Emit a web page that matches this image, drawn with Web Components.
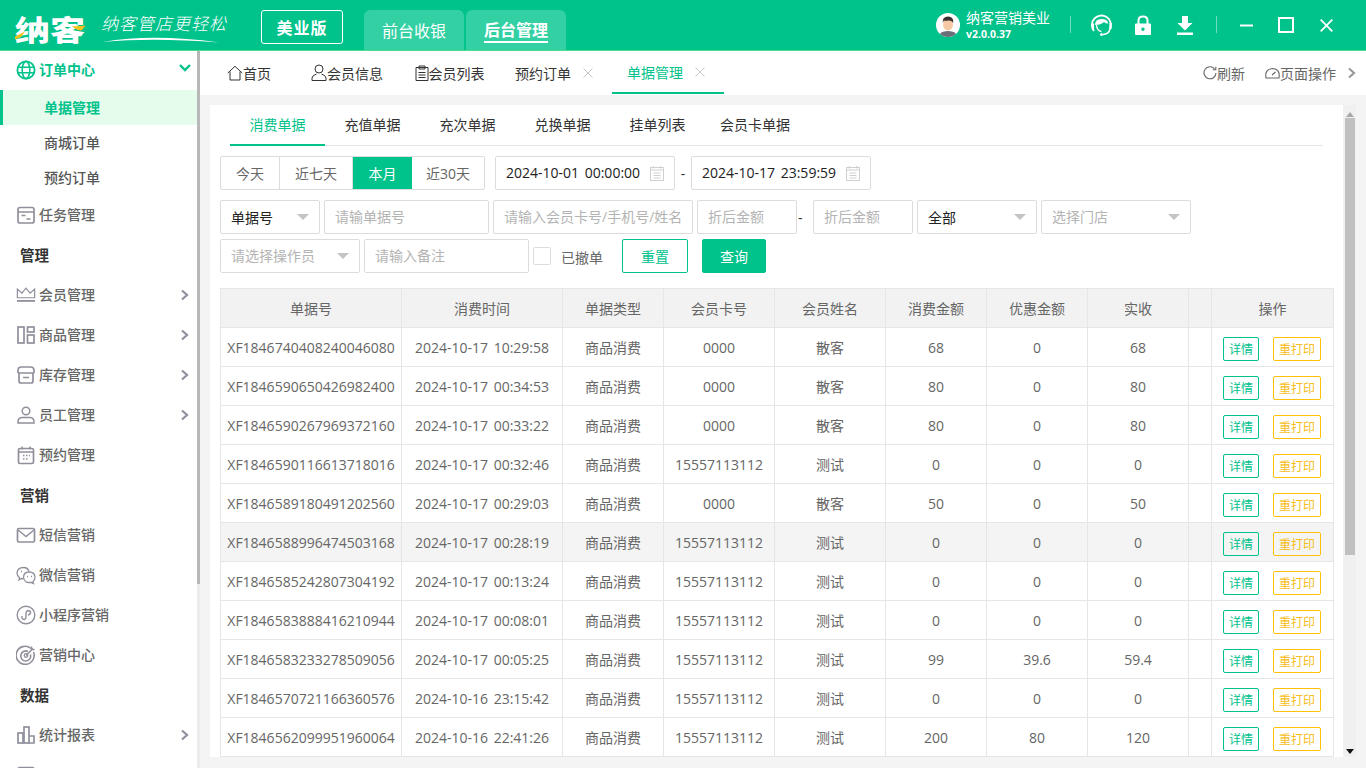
<!DOCTYPE html>
<html lang="zh-CN"><head><meta charset="utf-8"><title>纳客</title>
<style>
html,body{margin:0;height:768px;overflow:hidden;background:#f4f4f4}
body{font:14px "Open Sans","Noto Sans CJK SC",sans-serif;color:#666;display:grid;grid-template-columns:200px 1fr;grid-template-rows:51px 717px}
nk-header{grid-column:1/3}
</style></head><body>
<nk-header></nk-header>
<nk-sidebar></nk-sidebar>
<nk-main></nk-main>
<script>
const FONT='"Open Sans","Noto Sans CJK SC",sans-serif';
const svg=(w,h,vb,body,extra='')=>`<svg width="${w}" height="${h}" viewBox="${vb}" fill="none" ${extra}>${body}</svg>`;
const S='stroke="currentColor"';
const ICONS={
 globe:svg(20,20,'0 0 20 20',`<circle cx="10" cy="10" r="8.600" ${S} stroke-width="1.800"/><ellipse cx="10" cy="10" rx="3.800" ry="8.600" ${S} stroke-width="1.600"/><path d="M2 7.200h16M2 12.800h16" ${S} stroke-width="1.600"/>`),
 task:svg(20,20,'0 0 20 20',`<rect x="2" y="2.500" width="16" height="15.500" rx="2" ${S} stroke-width="1.700"/><path d="M2 7h16M5.500 10.500h4M10.500 14h4" ${S} stroke-width="1.500"/>`),
 crown:svg(22,20,'0 0 22 20',`<path d="M1.500 13V3.500l5 4.500L11 2.500 15.500 8l5-4.500V13z" ${S} stroke-width="1.300"/><path d="M1 16.500h20" ${S} stroke-width="2"/>`),
 goods:svg(20,20,'0 0 20 20',`<rect x="2" y="2" width="6" height="16" ${S} stroke-width="1.700"/><rect x="11.500" y="2" width="6.500" height="5" ${S} stroke-width="1.700"/><rect x="11.500" y="10" width="6.500" height="8" ${S} stroke-width="1.700"/>`),
 stock:svg(20,20,'0 0 20 20',`<path d="M2 8V5.500Q2 2 5.500 2h9Q18 2 18 5.500V8M2 8h16M3 8v8q0 2 2 2h10q2 0 2-2V8M7 12.500h6" ${S} stroke-width="1.700"/>`),
 staff:svg(20,20,'0 0 20 20',`<circle cx="10" cy="6" r="3.800" ${S} stroke-width="1.500"/><path d="M2 18v-1.500Q2 13 6 12.500h8q4 .5 4 4V18z" ${S} stroke-width="1.500"/>`),
 cal:svg(20,20,'0 0 20 20',`<rect x="2.500" y="3.500" width="15" height="15" rx="1.500" ${S} stroke-width="1.700"/><path d="M2.500 7h15M6 1.500v3M14 1.500v3" ${S} stroke-width="1.500"/><path d="M7 10.500h1.500M10 10.500h1.500M13 10.500h1M7 14h1.500M10 14h1.500" ${S} stroke-width="1.300"/>`),
 mail:svg(20,20,'0 0 20 20',`<rect x="1.500" y="3.500" width="17" height="13.500" rx="1.500" ${S} stroke-width="1.700"/><path d="M2 5l8 6.500L18 5" ${S} stroke-width="1.500"/>`),
 wechat:svg(20,20,'0 0 20 20',`<path d="M13 6.500Q12 2.500 7.500 2.500 1.500 2.500 1 8q0 3 2.500 4.500L3 15l2.500-1.500 2 .3" ${S} stroke-width="1.300"/><path d="M13 7q6 0 6 5.500 0 2.500-2 4l.5 2-2.500-1.200q-6.500 1.200-7.500-4.800Q7.500 7 13 7z" ${S} stroke-width="1.300"/><path d="M11 11.500h1M15 11.500h1M5 6.500h1" ${S} stroke-width="1.300"/>`),
 mini:svg(20,20,'0 0 20 20',`<circle cx="10" cy="10" r="8.800" ${S} stroke-width="1.400"/><path d="M6 11q-.5 3.500 2.500 3.500Q10 14 10 12V8.500Q10 6 12 5.500q2.500 0 2.500 2 0 2-2.500 2.500" ${S} stroke-width="1.400"/>`),
 target:svg(20,20,'0 0 20 20',`<path d="M15 3.500A9 9 0 1 0 17.500 7" ${S} stroke-width="1.600"/><path d="M12 6.500A5 5 0 1 0 14.500 9.500" ${S} stroke-width="1.600"/><circle cx="10" cy="10.500" r="1.800" ${S} stroke-width="1.300"/><path d="M10 10.500L17 3.500M15.500 1.500v3h3" ${S} stroke-width="1.500"/>`),
 chart:svg(20,20,'0 0 20 20',`<rect x="2" y="8" width="5" height="10" ${S} stroke-width="1.700"/><rect x="8" y="2" width="5" height="16" ${S} stroke-width="1.700"/><path d="M13 11h5v7h-5" ${S} stroke-width="1.700"/>`),
 right:svg(10,12,'0 0 10 12',`<path d="M2 1.500L7 6l-5 4.500" ${S} stroke-width="2.200"/>`),
 down:svg(12,10,'0 0 12 10',`<path d="M1 2l5 5 5-5" ${S} stroke-width="2.400"/>`),
 home:svg(16,16,'0 0 16 16',`<path d="M.8 8L8 1.300 15.200 8M3 6.500V15h10V6.500" ${S} stroke-width="1"/>`),
 user:svg(16,17,'0 0 16 17',`<circle cx="8" cy="5" r="4" ${S}/><path d="M1 16.500v-2.500Q1 11.500 5.500 10M15 16.500v-2.500q0-2.500-4.500-4M1 16.500h14" ${S}/>`),
 list:svg(14,16,'0 0 14 16',`<path d="M1 2.500h12V15.500H1zM4 1v3h6V1zM3.500 7.500h7M3.500 10h7M3.500 12.500h7" ${S}/>`),
 refresh:svg(14,14,'0 0 14 14',`<path d="M11.500 2.800A6 6 0 1 0 13 7" ${S} stroke-width="1.100"/><path d="M12.800 .8v3h-3" ${S} stroke-width="1.100"/>`),
 gauge:svg(15,14,'0 0 15 14',`<path d="M1 12Q-.5 3 7.500 2.500 15.500 3 14 12zM7 9l3.500-3" ${S} stroke-width="1.100"/>`),
 date:svg(16,17,'0 0 16 17',`<rect x="1.500" y="2.500" width="13" height="13" ${S}/><path d="M1.500 5h13M4.500 1v2.500M11.500 1v2.500M4.500 8h7M4.500 10.500h7M4.500 13h7" ${S}/>`)
};
class Base extends HTMLElement{
 constructor(){super();this.attachShadow({mode:'open'});}
 set(html){this.shadowRoot.innerHTML=html;}
}
class NkHeader extends Base{connectedCallback(){this.set(`<style>
:host{display:flex;align-items:stretch;height:51px;box-sizing:border-box;background:#00c28b;border-bottom:1px solid #4bdc8e;color:#fff;font-family:${FONT}}
.logo{width:71px;margin-left:15px;display:flex;align-items:center;font:900 35px/1 "Noto Sans CJK SC",sans-serif;white-space:nowrap;position:relative;box-sizing:border-box}
.logo span{display:block;transform:scaleY(.8);transform-origin:50% 50%;margin-top:6px}
.logo svg{position:absolute;left:0;top:0}
.slogan{margin-left:15px;width:125px;display:flex;flex-direction:column;padding-top:12px;font:italic 300 17px/21px "Noto Sans CJK SC",sans-serif;letter-spacing:1px;white-space:nowrap}
.slogan svg{margin-top:2px;margin-left:2px}
.ed{margin:10px 0 6px 35px;width:82px;box-sizing:border-box;border:1px solid #fff;border-radius:3px;display:flex;align-items:center;justify-content:center;font-weight:700;font-size:16px;letter-spacing:1px}
.tab{margin-top:10px;width:100px;background:#33d0a3;border-radius:6px 6px 0 0;display:flex;align-items:center;justify-content:center;font-size:16px;padding-bottom:1px;box-sizing:border-box}
.t1{margin-left:21px}.t2{margin-left:2px;font-weight:700}
.t2 span{border-bottom:2px solid #fff;line-height:20px;padding-bottom:1px;margin-top:3px}
.sp{flex:1}
.av{margin-top:13px;width:24px;height:24px;margin-right:6px}
.who{width:104px;padding-top:8px;font-size:14px;line-height:19px}
.who small{display:block;font-size:10.500px;font-weight:700;line-height:15px}
.sep{width:1px;height:17px;background:#6fdcbc;margin-top:16px}
.ic{display:flex;align-items:center;justify-content:center;height:50px}
</style>
<div class="logo"><span>纳客</span>${svg(71,50,'0 0 71 50','<path d="M0 36.500L10 31.500l-4 5.500-6 2.500z" fill="#f6c21c"/><path d="M57 26q6 .5 13.500-.5l-4 5q-5 0-9.500-4.500z" fill="#f6c21c"/>')}</div>
<div class="slogan"><span>纳客管店更轻松</span>${svg(116,8,'0 0 116 8','<path d="M0 7Q50 -1.500 116 7.500Q50 2.500 0 7z" fill="#fff"/>')}</div>
<div class="ed">美业版</div>
<div class="tab t1">前台收银</div><div class="tab t2"><span>后台管理</span></div>
<div class="sp"></div>
<div class="av">${svg(24,24,'0 0 24 24','<defs><clipPath id="c"><circle cx="12" cy="12" r="12"/></clipPath></defs><circle cx="12" cy="12" r="12" fill="#fff"/><g clip-path="url(#c)"><path d="M3 24q0-6 9-6t9 6z" fill="#6b6f78"/><ellipse cx="12" cy="11.500" rx="5" ry="6" fill="#f6c9a4"/><path d="M6.800 10Q6 3.500 12 3.500T17.200 10Q16 7 12.500 7.500 9 8 7.800 7.500z" fill="#3a3230"/></g>')}</div>
<div class="who">纳客营销美业<small>v2.0.0.37</small></div>
<div class="sep"></div>
<div class="ic" style="margin-left:20px;width:21px">${svg(21,23,'0 0 21 23','<path d="M3 17A9.500 9.500 0 1 1 19 15" stroke="#fff" stroke-width="1.800"/><path d="M4 11Q4 5 10.500 5T17 9.500q-2 .5-4-1.500-3 3-9 3z" fill="#fff"/><path d="M2 9.500v6M19.500 9v6" stroke="#fff" stroke-width="2.200"/><path d="M5.500 11q.5 6 5 6.500M19 15q-1 5-7 5.500" stroke="#fff" stroke-width="1.400"/><circle cx="10.500" cy="20.500" r="1.500" fill="#fff"/>')}</div>
<div class="ic" style="margin-left:23px;width:16px">${svg(16,21,'0 0 16 21','<path d="M3.500 9V5.500Q3.500 1.500 8 1.500T12.500 5.500V9" stroke="#fff" stroke-width="2"/><path fill-rule="evenodd" d="M1 8.500h14q1 0 1 1V19q0 1-1 1H1q-1 0-1-1V9.500q0-1 1-1zM8 12.500a1.700 1.700 0 1 0 .01 0z" fill="#fff"/>')}</div>
<div class="ic" style="margin-left:26px;width:16px">${svg(16,19,'0 0 16 19','<path d="M5 0h6v7h4.500L8 14.500.5 7H5zM0 16.500h16V19H0z" fill="#fff"/>')}</div>
<div class="sep" style="margin-left:23px"></div>
<div class="ic" style="margin-left:23px;width:13px">${svg(13,3,'0 0 13 3','<path d="M0 1.500h13" stroke="#fff" stroke-width="2"/>')}</div>
<div class="ic" style="margin-left:25px;width:16px">${svg(16,16,'0 0 16 16','<rect x="1" y="1" width="14" height="14" stroke="#fff" stroke-width="2"/>')}</div>
<div class="ic" style="margin:0 33px 0 26px;width:13px">${svg(13,13,'0 0 13 13','<path d="M.7.700l11.600 11.600M12.300.700L.7 12.300" stroke="#fff" stroke-width="1.800"/>')}</div>`);}}
class NkNavItem extends Base{connectedCallback(){
 const icon=this.getAttribute('icon'),arrow=this.hasAttribute('arrow');
 this.set(`<style>
:host{display:flex;align-items:center;height:40px;flex:none;color:#666;font-weight:500;font-size:14px}
:host([open]){color:#00c28b;font-weight:700}
.i{width:20px;height:20px;margin-left:16px;margin-right:3px;display:flex;color:#90909c}
:host([open]) .i{color:#00c28b}
.t{margin-top:-2px}
.a{margin-left:auto;margin-right:7px;display:flex;color:#90909c}
:host([open]) .a{color:#00c28b;margin-top:-4px;margin-right:6px}
</style><span class="i">${ICONS[icon]}</span><span class="t"><slot></slot></span>${arrow?`<span class="a">${this.hasAttribute('open')?ICONS.down:ICONS.right}</span>`:''}`);}}
class NkSubItem extends Base{connectedCallback(){this.set(`<style>
:host{display:flex;align-items:center;height:35px;flex:none;padding:0 0 2px 44px;color:#555;font-weight:500;font-size:14px;box-sizing:border-box}
:host([active]){background:#e5fced;color:#00c28b;font-weight:700;border-left:3px solid #00c28b;padding-left:41px}
</style><slot></slot>`);}}
class NkSection extends Base{connectedCallback(){this.set(`<style>
:host{display:flex;align-items:center;height:40px;flex:none;padding:0 0 2px 20px;color:#333;font-weight:700;font-size:14.500px;box-sizing:border-box}
</style><slot></slot>`);}}
class NkSidebar extends Base{connectedCallback(){
 const n=(i,t,a)=>`<nk-nav-item icon="${i}" ${a?'arrow':''}>${t}</nk-nav-item>`;
 this.set(`<style>
:host{display:flex;height:717px;overflow:hidden;background:#fff;font-family:${FONT}}
.col{width:197px;flex:none;display:flex;flex-direction:column;overflow:hidden}
.bar{width:3px;background:#ececec;flex:none}
.thumb{height:533px;background:#b8b8b8}
.first{margin-top:-1px}
</style><div class="col">
<nk-nav-item class="first" icon="globe" arrow open>订单中心</nk-nav-item>
<nk-sub-item active>单据管理</nk-sub-item><nk-sub-item>商城订单</nk-sub-item><nk-sub-item>预约订单</nk-sub-item>
${n('task','任务管理')}<nk-section>管理</nk-section>
${n('crown','会员管理',1)}${n('goods','商品管理',1)}${n('stock','库存管理',1)}${n('staff','员工管理',1)}${n('cal','预约管理')}
<nk-section>营销</nk-section>
${n('mail','短信营销')}${n('wechat','微信营销')}${n('mini','小程序营销')}${n('target','营销中心')}
<nk-section>数据</nk-section>${n('chart','统计报表',1)}${n('task','')}
</div><div class="bar"><div class="thumb"></div></div>`);}}
class NkBtn extends Base{connectedCallback(){this.set(`<style>
:host{display:flex;align-items:center;justify-content:center;box-sizing:border-box;height:34px;border-radius:2px;font-size:14px;border:1px solid #00c28b;color:#00c28b;background:#fff}
:host([primary]){background:#00c28b;color:#fff}
</style><slot></slot>`);}}
class NkField extends Base{connectedCallback(){
 const ph=this.hasAttribute('ph'),kind=this.getAttribute('kind')||'';
 const tail=kind==='select'?`<svg width="12" height="6" viewBox="0 0 12 6"><path d="M0 0h12L6 6z" fill="#c4c4c4"/></svg>`:kind==='date'?`<span class="d">${ICONS.date}</span>`:'';
 this.set(`<style>
:host{display:flex;align-items:center;justify-content:space-between;box-sizing:border-box;height:34px;border:1px solid #dcdcdc;border-radius:2px;background:#fff;padding:0 10px;font-size:14px;color:${ph?'#b4b4b4':'#222'};white-space:nowrap;overflow:hidden}
.t{margin-top:-1px}
:host([ph]) .t{margin-top:-2px}
:host([kind=date]) .t{word-spacing:2px}
.d{display:flex;color:#d0d0d0;margin-right:-1px}
</style><span class="t"><slot></slot></span>${tail}`);}}
class NkTable extends Base{connectedCallback(){
 const cols=[181,161,101,111,111,101,101,101,23,122];
 const head=['单据号','消费时间','单据类型','会员卡号','会员姓名','消费金额','优惠金额','实收','','操作'];
 const R=[['XF1846740408240046080','2024-10-17 10:29:58','0000','散客','68','0','68'],
 ['XF1846590650426982400','2024-10-17 00:34:53','0000','散客','80','0','80'],
 ['XF1846590267969372160','2024-10-17 00:33:22','0000','散客','80','0','80'],
 ['XF1846590116613718016','2024-10-17 00:32:46','15557113112','测试','0','0','0'],
 ['XF1846589180491202560','2024-10-17 00:29:03','0000','散客','50','0','50'],
 ['XF1846588996474503168','2024-10-17 00:28:19','15557113112','测试','0','0','0'],
 ['XF1846585242807304192','2024-10-17 00:13:24','15557113112','测试','0','0','0'],
 ['XF1846583888416210944','2024-10-17 00:08:01','15557113112','测试','0','0','0'],
 ['XF1846583233278509056','2024-10-17 00:05:25','15557113112','测试','99','39.6','59.4'],
 ['XF1846570721166360576','2024-10-16 23:15:42','15557113112','测试','0','0','0'],
 ['XF1846562099951960064','2024-10-16 22:41:26','15557113112','测试','200','80','120']];
 const rows=R.map((r,i)=>`<tr class="${i===5?'hl':''}"><td>${r[0]}</td><td class="dt">${r[1]}</td><td>商品消费</td><td>${r[2]}</td><td>${r[3]}</td><td>${r[4]}</td><td>${r[5]}</td><td>${r[6]}</td><td></td><td class="op"><div class="ops"><span class="b g">详情</span><span class="b y">重打印</span></div></td></tr>`).join('');
 this.set(`<style>
:host{display:block;font-size:14px;color:#666}
table{border-collapse:collapse;table-layout:fixed;width:1113px;margin:0}
th,td{border:1px solid #e6e6e6;height:38px;padding:0;text-align:center;font-weight:400;white-space:nowrap;box-sizing:content-box;overflow:hidden}
th{background:#f2f2f2}
tr.hl td{background:#f4f4f4}
.dt{word-spacing:2px}
.op,th:last-child{box-shadow:-4px 0 4px -2px rgba(0,0,0,.07)}
.ops{display:flex;gap:14px;justify-content:center;padding-right:1px;padding-top:3px}
.b{box-sizing:border-box;height:24px;border-radius:2px;font-size:12px;display:flex;align-items:center;justify-content:center;background:transparent;border:1px solid}
.g{width:36px;color:#00c28b;border-color:#00c28b}
.y{width:48px;color:#f6bd1c;border-color:#ffc107}
</style><table><colgroup>${cols.map(c=>`<col style="width:${c}px">`).join('')}</colgroup><thead><tr>${head.map(h=>`<th>${h}</th>`).join('')}</tr></thead><tbody>${rows}</tbody></table>`);}}
class NkMain extends Base{connectedCallback(){
 const tab=(ic,t,w,x,act)=>`<div class="tb ${act?'act':''}" style="width:${w}px">${ic?`<span class="ti">${ICONS[ic]}</span>`:''}<span>${t}</span>${x?`<span class="x">${svg(10,10,'0 0 10 10','<path d="M.5.500l9 9M9.500.500l-9 9" stroke="#c8c8c8"/>')}</span>`:''}</div>`;
 this.set(`<style>
:host{display:flex;flex-direction:column;height:717px;overflow:hidden;font-family:${FONT}}
.bar{height:44px;flex:none;background:#fff;display:flex;align-items:stretch;font-size:14px;color:#333;padding-left:27px}
.tb{display:flex;align-items:center;justify-content:center;box-sizing:border-box;white-space:nowrap;flex:none;margin-top:-1px}
.ti{display:flex}.x{display:flex;margin-left:12px}
.act{color:#00c28b;border-bottom:2px solid #00c28b;margin-bottom:1px;margin-top:0;justify-content:flex-start;padding-left:15px}
.tools{margin-left:auto;display:flex;align-items:center;color:#666;padding-right:9px;margin-top:-1px}
.tools span{display:flex;align-items:center}
.body{flex:1;display:flex;min-height:0;padding-top:10px}
.card{margin-left:10px;width:1133px;height:652px;flex:none;background:#fff;overflow:hidden;padding:0 10px;box-sizing:border-box}
.sub{display:flex;margin:0 10px;height:40px;border-bottom:1px solid #e6e6e6;color:#333;font-size:14px}
.sub div{width:95px;text-align:center;line-height:40px;box-sizing:border-box;height:41px;flex:none}
.sub .on{color:#00c28b;border-bottom:2px solid #00c28b}
.row{display:flex;align-items:center;font-size:14px}
.r1{margin-top:10px}.r2{margin-top:10px}.r3{margin-top:5px;margin-bottom:15px}
.seg{display:flex;height:34px;box-sizing:border-box;border:1px solid #dcdcdc;border-radius:2px;color:#666;width:265px}
.seg div{display:flex;align-items:center;justify-content:center;border-right:1px solid #dcdcdc;box-sizing:border-box}
.seg div:last-child{border-right:0}
.seg .on{background:#00c28b;color:#fff;border-right:0}
.dash{color:#333}
.chk{width:18px;height:18px;box-sizing:border-box;border:1px solid #dcdcdc;border-radius:2px;margin:0 10px 0 4px}
.sc{width:13px;flex:none;background:#f0f0f0;height:652px;display:flex;flex-direction:column;align-items:center;font-size:0}
.th{width:10px;height:437px;background:#c0c0c0;margin-top:1px}
.ar{width:0;height:0;border-left:4px solid transparent;border-right:4px solid transparent;margin-top:7px}
.up{border-bottom:5px solid #a8a8a8}.dn{border-top:5px solid #111;margin-top:auto;margin-bottom:3px}
</style>
<div class="bar">
${tab('home','首页',44)}<span style="width:40px"></span>${tab('user','会员信息',72)}<span style="width:31px"></span>${tab('list','会员列表',71)}<span style="width:30px"></span>${tab('','预约订单',78,1)}<span style="width:19px"></span>${tab('','单据管理',112,1,1)}
<div class="tools"><span style="margin-right:20px">${ICONS.refresh}刷新</span><span>${ICONS.gauge}页面操作</span><span style="margin-left:11px;color:#9a9a9a">${ICONS.right}</span></div>
</div>
<div class="body"><div class="card">
<div class="sub"><div class="on">消费单据</div><div>充值单据</div><div>充次单据</div><div>兑换单据</div><div>挂单列表</div><div style="width:100px">会员卡单据</div></div>
<div class="row r1"><div class="seg"><div style="width:59px">今天</div><div style="width:73px">近七天</div><div class="on" style="width:59px">本月</div><div style="width:72px">近30天</div></div>
<nk-field kind="date" style="width:180px;margin-left:10px">2024-10-01 00:00:00</nk-field><span class="dash" style="width:16px;text-align:center">-</span><nk-field kind="date" style="width:180px">2024-10-17 23:59:59</nk-field></div>
<div class="row r2"><nk-field kind="select" style="width:100px">单据号</nk-field><nk-field ph style="width:165px;margin-left:4px">请输单据号</nk-field><nk-field ph style="width:200px;margin-left:4px">请输入会员卡号/手机号/姓名</nk-field><nk-field ph style="width:100px;margin-left:4px">折后金额</nk-field><span class="dash" style="width:16px;padding-left:1px;box-sizing:border-box">-</span><nk-field ph style="width:100px">折后金额</nk-field><nk-field kind="select" style="width:120px;margin-left:4px">全部</nk-field><nk-field ph kind="select" style="width:150px;margin-left:4px">选择门店</nk-field></div>
<div class="row r3"><nk-field ph kind="select" style="width:140px">请选择操作员</nk-field><nk-field ph style="width:165px;margin-left:4px">请输入备注</nk-field><span class="chk"></span><span style="width:61px;color:#666;margin-top:2px">已撤单</span><nk-btn style="width:66px">重置</nk-btn><nk-btn primary style="width:64px;margin-left:14px">查询</nk-btn></div>
<nk-table></nk-table>
</div><div class="sc"><span class="ar up"></span><div class="th"></div><span class="ar dn"></span></div></div>`);}}
[['nk-header',NkHeader],['nk-nav-item',NkNavItem],['nk-sub-item',NkSubItem],['nk-section',NkSection],['nk-sidebar',NkSidebar],['nk-btn',NkBtn],['nk-field',NkField],['nk-table',NkTable],['nk-main',NkMain]].forEach(([n,c])=>customElements.define(n,c));
</script></body></html>
